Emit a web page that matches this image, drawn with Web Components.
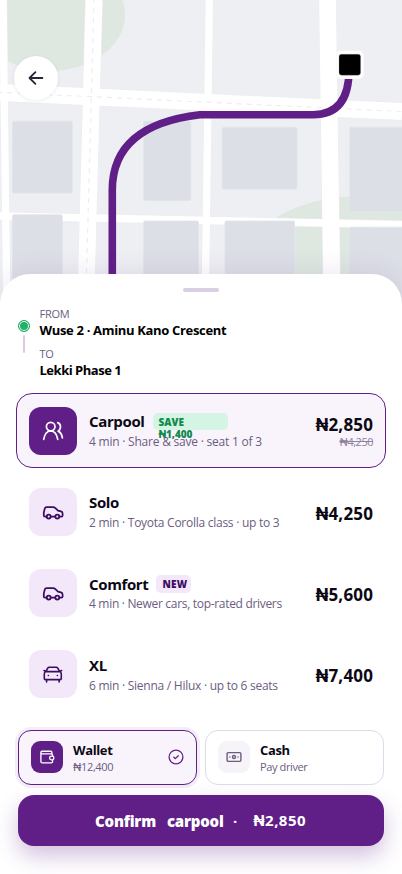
<!DOCTYPE html>
<html lang="en">
<head>
<meta charset="utf-8">
<title>Choose a ride</title>
<style>
html,body{margin:0;width:402px;height:874px;overflow:hidden;background:#fff}
body{font-family:"Open Sans",Inter,"Noto Sans",sans-serif;color:#0c0915}
</style>
</head>
<body>
<ride-screen></ride-screen>
<script>
const define = (name, html) => customElements.define(name, class extends HTMLElement {
  connectedCallback() {
    if (this.shadowRoot) return;
    const root = this.attachShadow({ mode: 'open' });
    const t = document.createElement('template');
    t.innerHTML = typeof html === 'function' ? html(this) : html;
    root.append(t.content.cloneNode(true));
  }
});

const ICONS = {
  users: ['0 0 24 24', 24, 1.7, '<circle cx="9.7" cy="7.6" r="4.3"/><path d="M2.7 20.4C3.6 15 6.2 12 9.7 12S15.8 15 16.7 20.4M16.7 3.6C20.2 5 20.5 9.8 17.1 12.1C19.6 13.2 20.9 15.4 21.4 18.8"/>'],
  car: ['0 0 24 24', 24, 1.75, '<circle cx="7.7" cy="16.6" r="2"/><circle cx="16.3" cy="16.6" r="2"/><path d="M5.6 16.6H4Q2.8 16.6 2.8 15.4V12.6L3.7 8.8Q4.1 7.2 5.7 7.2H12Q13.4 7.2 14.4 8.1L17 10.6L20 11.3Q21.6 11.8 21.6 13.4V15.5Q21.6 16.6 20.5 16.6H18.4M9.8 16.6H14.2"/>'],
  van: ['0 0 24 24', 24, 1.6, '<path d="M4.9 9.6L6.7 6.2Q7.2 5.2 8.4 5.2H15.1Q16.3 5.2 16.8 6.2L18.7 9.6M4.9 9.6H18.7Q20.3 10.2 20.3 12V16.5Q20.3 17.6 19.2 17.6H4.4Q3.3 17.6 3.3 16.5V12Q3.3 10.2 4.9 9.6ZM5.6 17.8V19.9M18.1 17.8V19.9M3 8.6L4.7 9.2M20.6 8.6L18.9 9.2M7.3 13.5H7.4M16.3 13.5H16.4"/>'],
  wallet: ['0 0 16 16', 16, 1.35, '<path d="M12.9 4.8V3.4Q12.9 2.2 11.7 2.2H3Q1.9 2.2 1.9 3.4V12.5Q1.9 13.8 3.2 13.8H12.3Q13.6 13.8 13.6 12.5V11.4M1.9 3.6Q2 4.8 3.2 4.8H12.3Q13.6 4.8 13.6 6.1V7.1"/><rect x="10.6" y="7.1" width="4.3" height="3.8" rx="1.8"/>'],
  cash: ['0 0 16 16', 16, 1.4, '<rect x="1.1" y="3.6" width="13.8" height="8.8" rx="1.1"/><circle cx="8" cy="8" r="1.5"/><path d="M3.9 8H4M12 8H12.1"/>'],
  check: ['0 0 16 16', 16, 1.3, '<circle cx="8" cy="8" r="6.9"/><path d="M5.8 8.2L7.3 9.6L10.3 6.7"/>'],
  back: ['0 0 20 20', 20, 1.8, '<path d="M16.4 10H3.6M9.4 4.1L3.5 10L9.4 15.9"/>']
};
define('ui-icon', el => {
  const [box, size, sw, body] = ICONS[el.getAttribute('name')];
  return `<style>:host{display:block;flex:none;width:${size}px;height:${size}px}svg{display:block}</style>
  <svg width="${size}" height="${size}" viewBox="${box}" fill="none" stroke="currentColor" stroke-width="${sw}" stroke-linecap="round" stroke-linejoin="round">${body}</svg>`;
});

define('city-map', `
<style>:host{display:block;width:402px;height:320px}svg{display:block}</style>
<svg width="402" height="320" viewBox="0 0 402 320" fill="none">
  <rect width="402" height="320" fill="#eeeff3"/>
  <ellipse cx="50" cy="15" rx="75" ry="56" fill="#dee8e1"/>
  <ellipse cx="362" cy="266" rx="119" ry="70" fill="#dee8e1"/>
  <g stroke="#ebecf0">
    <g stroke-width="8.6"><path d="M3 0L7 320M209.3 0L205 320M0 216L402 224.6"/></g>
    <g stroke-width="17.8"><path d="M94 0L85.3 320M327.5 0L332.3 320M0 92.5L402 111.5"/></g>
  </g>
  <g stroke="#fff">
    <g stroke-width="7.4"><path d="M3 0L7 320M209.3 0L205 320M0 216L402 224.6"/></g>
    <g stroke-width="16.8"><path d="M94 0L85.3 320M327.5 0L332.3 320M0 92.5L402 111.5"/></g>
  </g>
  <path d="M94 -2L85.3 318M-3 92.2L402 111.5" stroke="#eeeef2" stroke-width="1.2" stroke-dasharray="5 5"/>
  <g fill="#dddfe7" stroke="#e1e3ea" stroke-width=".8">
    <rect x="12.5" y="121.3" width="59.7" height="71.8" rx="1.5"/>
    <rect x="143.6" y="121.3" width="47.2" height="79.2" rx="1.5"/>
    <rect x="222.3" y="127.3" width="74.6" height="61.8" rx="1.5"/>
    <rect x="349.8" y="127.3" width="70" height="84.4" rx="1.5"/>
    <rect x="12.5" y="214.8" width="49.8" height="90" rx="1.5"/>
    <rect x="143.6" y="221" width="54.8" height="90" rx="1.5"/>
    <rect x="225" y="221" width="69.6" height="90" rx="1.5"/>
    <rect x="349.8" y="227.2" width="70" height="90" rx="1.5"/>
  </g>
  <path d="M112.3 320V190Q112.3 125 200 114.7H313Q349 114.7 349 70" stroke="#5f1f87" stroke-width="7.6"/>
  <rect x="336" y="50.4" width="28" height="28.6" rx="5" fill="#f7f7f9"/>
  <rect x="336.6" y="51" width="26.8" height="27.6" rx="5" fill="#fff"/>
  <rect x="339" y="54.2" width="21.6" height="21" rx="2.4" fill="#000" stroke="#999" stroke-width=".3"/>
</svg>`);

define('back-button', `
<style>:host{display:grid;place-items:center;width:44px;height:44px;border-radius:50%;background:#fff;color:#292436;box-shadow:0 1px 4px rgba(30,20,60,.08)}</style>
<ui-icon name="back"></ui-icon>`);

define('trip-summary', `
<style>
:host{display:flex;gap:9.5px;padding:0 18px}
.rail{display:flex;flex-direction:column;align-items:center;width:12px;padding-top:14px;gap:3px}
.dot{box-sizing:border-box;width:12px;height:12px;border-radius:50%;background:#23b067;border:1px solid #23b067;box-shadow:inset 0 0 0 1px #fff}
.line{width:2px;height:18px;background:#d9cbe3;border-radius:1px}
.stops{display:flex;flex-direction:column;gap:7px}
.k{font-size:11px;line-height:15px;font-weight:500;color:#6b5d80;letter-spacing:-.25px}
.v{font-size:13px;line-height:18px;font-weight:700;letter-spacing:-.33px;color:#000}
.v.s{letter-spacing:-.48px}
</style>
<div class="rail"><div class="dot"></div><div class="line"></div></div>
<div class="stops">
  <div><div class="k">FROM</div><div class="v">Wuse 2 · Aminu Kano Crescent</div></div>
  <div><div class="k">TO</div><div class="v s">Lekki Phase 1</div></div>
</div>`);

define('ride-badge', `
<style>
:host{display:block;box-sizing:border-box;width:75px;height:17px;padding:3px 6px 0;border-radius:5px;background:#d4f5e3;color:#138a4e;font-size:10px;line-height:12px;font-weight:800;letter-spacing:-.05px}
:host([kind=new]){width:35px;height:18px;padding-top:3px;background:#f3e8fa;color:#3d0c66;letter-spacing:.25px}
</style><slot></slot>`);

define('ride-option', `
<style>
:host{box-sizing:border-box;display:flex;align-items:center;gap:12px;height:75px;padding:0 12px;border:1px solid transparent;border-radius:16px}
:host([selected]){border-color:#5f1f87;background:#f9f4fc}
.pic{display:grid;place-items:center;width:48px;height:48px;border-radius:12px;background:#f3e8fa;color:#3a0d62;flex:none}
:host([selected]) .pic{background:#5f1f87;color:#fff}
.text{flex:1;min-width:0;padding-top:var(--drop,0);display:flex;flex-direction:column;gap:var(--tg,2px)}
.title{display:flex;align-items:flex-start;gap:8px;height:20px;font-size:15px;line-height:20px;font-weight:700;letter-spacing:-.36px;white-space:nowrap}
::slotted([slot=badge]){margin-top:var(--bt,2px);white-space:normal}
.sub{font-size:12px;line-height:17px;color:#6b5d80;letter-spacing:var(--ls,-.26px);white-space:nowrap}
.cost{display:flex;flex-direction:column;align-items:flex-end;padding-top:var(--cp,4px);white-space:nowrap}
.price{font-size:17px;line-height:20px;font-weight:700;letter-spacing:.2px;margin-right:-.2px}
::slotted([slot=old]){font-size:11px;line-height:15px;margin-top:-1px;color:#8f829f;text-decoration:line-through;letter-spacing:-.5px}
</style>
<div class="pic"><slot name="icon"></slot></div>
<div class="text"><div class="title"><slot name="name"></slot><slot name="badge"></slot></div><div class="sub"><slot name="info"></slot></div></div>
<div class="cost"><div class="price"><slot name="price"></slot></div><slot name="old"></slot></div>`);

define('pay-method', `
<style>
:host{box-sizing:border-box;flex:1;display:flex;align-items:center;gap:10px;height:55px;padding:0 12px 1px;border:1px solid #dfdaea;border-radius:13px;background:#fff}
:host([selected]){border-color:#5f1f87;background:#f9f4fc;box-shadow:0 0 0 3px #f2edf6}
.pic{display:grid;place-items:center;width:32px;height:32px;border-radius:9px;background:#f6f3f9;color:#6b5d80;flex:none}
:host([selected]) .pic{background:#5f1f87;color:#fff}
.text{flex:1;padding-top:3px}
.n{font-size:13px;line-height:17px;font-weight:700;letter-spacing:-.38px}
.d{font-size:11px;line-height:16px;color:#6b5d80;letter-spacing:-.38px}
::slotted([slot=mark]){color:#5f1f87}
</style>
<div class="pic"><slot name="icon"></slot></div>
<div class="text"><div class="n"><slot name="name"></slot></div><div class="d"><slot name="info"></slot></div></div>
<slot name="mark"></slot>`);

define('confirm-button', `
<style>
:host{display:flex;justify-content:center;height:51px;border-radius:16px;background:#5f1f87;color:#fff;font-size:15px;line-height:20px;font-weight:700;box-shadow:0 10px 22px rgba(95,31,135,.28)}
.in{display:flex;padding-top:16px;white-space:pre;padding-right:1px}
.c{letter-spacing:-.22px;font-weight:800}
.dot{margin:0 16px 0 9.5px}
.w{margin-left:11px}
.p{margin-top:-1px;letter-spacing:.45px}
</style>
<div class="in"><span class="c">Confirm</span><span class="c w">carpool</span><span class="dot">·</span><span class="p">₦2,850</span></div>`);

define('ride-sheet', `
<style>
:host{position:relative;box-sizing:border-box;display:flex;flex-direction:column;height:600px;margin-top:-46px;background:#fff;border-radius:30px 30px 0 0;box-shadow:0 -6px 22px rgba(60,20,110,.08)}
.grip{width:36px;height:4px;margin:14px auto;border-radius:2px;background:#d8d0e2}
.list{display:flex;flex-direction:column;gap:6px;margin:14px 16px 0}
.pay{display:flex;gap:8px;margin:19px 18px 10px}
confirm-button{margin:0 18px}
</style>
<div class="grip"></div>
<trip-summary></trip-summary>
<div class="list">
  <ride-option selected style="--ls:-.22px;--cp:2px"><ui-icon slot="icon" name="users"></ui-icon><span slot="name">Carpool</span><ride-badge slot="badge">SAVE<br>₦1,400</ride-badge><span slot="info">4 min · Share &amp; save · seat 1 of 3</span><span slot="price">₦2,850</span><span slot="old">₦4,250</span></ride-option>
  <ride-option><ui-icon slot="icon" name="car"></ui-icon><span slot="name">Solo</span><span slot="info">2 min · Toyota Corolla class · up to 3</span><span slot="price">₦4,250</span></ride-option>
  <ride-option style="--drop:1px;--tg:1px;--bt:1px;--ls:-.31px"><ui-icon slot="icon" name="car"></ui-icon><span slot="name">Comfort</span><ride-badge slot="badge" kind="new">NEW</ride-badge><span slot="info">4 min · Newer cars, top-rated drivers</span><span slot="price">₦5,600</span></ride-option>
  <ride-option style="--drop:2px"><ui-icon slot="icon" name="van"></ui-icon><span slot="name">XL</span><span slot="info">6 min · Sienna / Hilux · up to 6 seats</span><span slot="price">₦7,400</span></ride-option>
</div>
<div class="pay">
  <pay-method selected><ui-icon slot="icon" name="wallet"></ui-icon><span slot="name">Wallet</span><span slot="info">₦12,400</span><ui-icon slot="mark" name="check"></ui-icon></pay-method>
  <pay-method><ui-icon slot="icon" name="cash"></ui-icon><span slot="name">Cash</span><span slot="info">Pay driver</span></pay-method>
</div>
<confirm-button></confirm-button>`);

define('ride-screen', `
<style>
:host{position:relative;display:flex;flex-direction:column;width:402px;height:874px;overflow:hidden;background:#fff}
back-button{position:absolute;left:14px;top:56px}
</style>
<city-map></city-map><back-button></back-button><ride-sheet></ride-sheet>`);
</script>
</body>
</html>
